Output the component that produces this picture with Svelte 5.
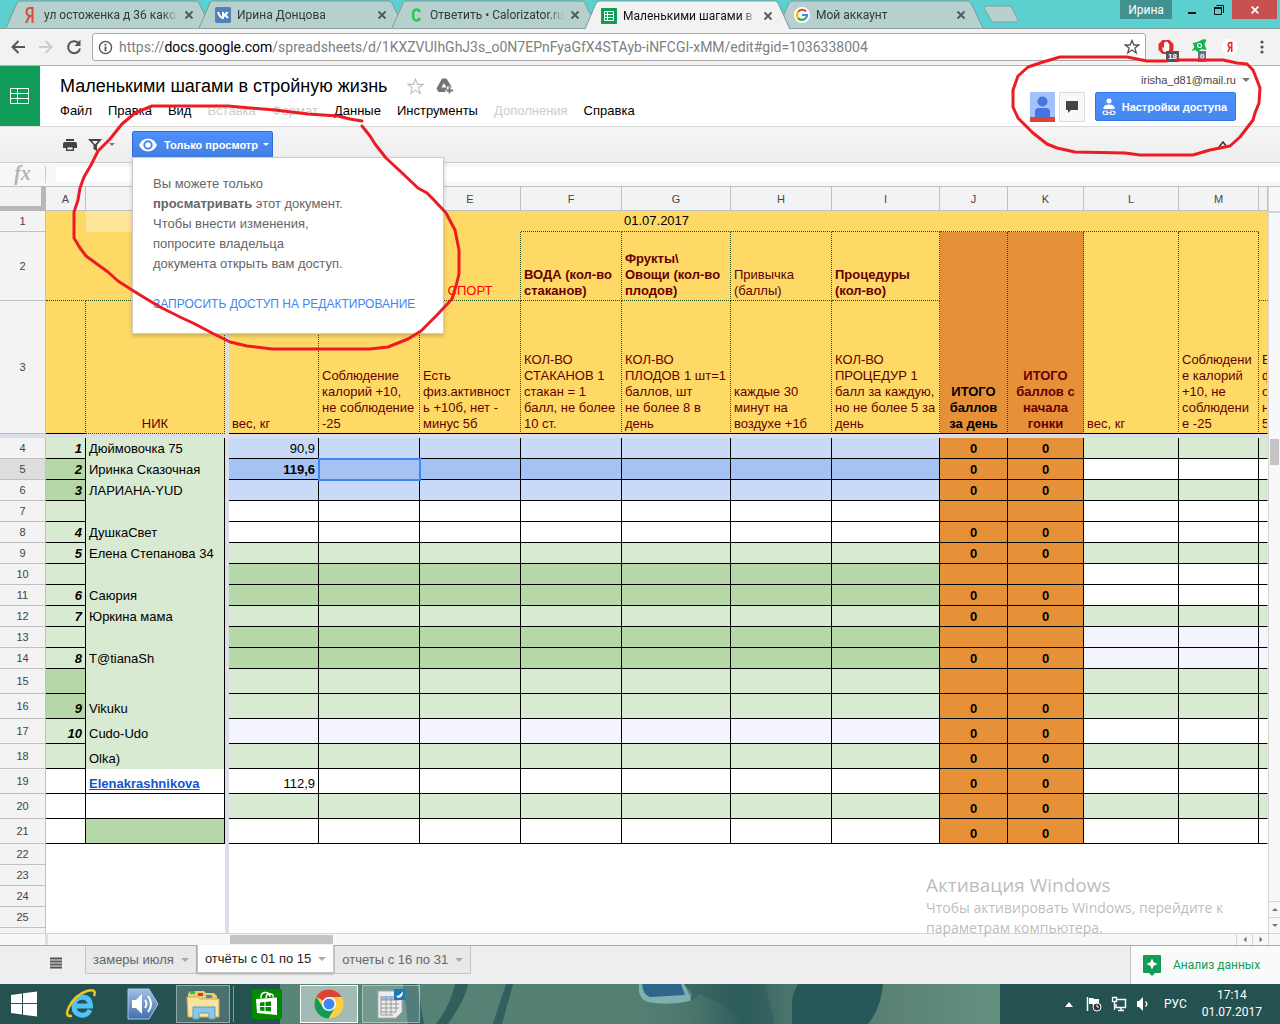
<script>
  const tabs = [
    { icon: 'ya', title: 'ул остоженка д 36 какое' },
    { icon: 'vk', title: 'Ирина Донцова' },
    { icon: 'cal', title: 'Ответить • Calorizator.ru' },
    { icon: 'sheet', title: 'Маленькими шагами в стройную', active: true },
    { icon: 'g', title: 'Мой аккаунт' }
  ];

  const menus = [
    ['Файл'], ['Правка'], ['Вид'], ['Вставка', true], ['Формат', true],
    ['Данные'], ['Инструменты'], ['Дополнения', true], ['Справка']
  ];

  const columns = ['A', 'B', '', 'C', 'D', 'E', 'F', 'G', 'H', 'I', 'J', 'K', 'L', 'M', ''];
  const cols = ['a', 'b', 'fr', 'c', 'd', 'd', 'd', 'g', 'd', 'i', 'j', 'k', 'l', 'm', 'n'];

  const tasks = [
    'КОЛ-ВО\nСТАКАНОВ 1\nстакан = 1\nбалл, не более\n10 ст.',
    'КОЛ-ВО\nПЛОДОВ 1 шт=1\nбаллов, шт\nне более 8 в\nдень',
    'каждые 30\nминут на\nвоздухе +1б',
    'КОЛ-ВО\nПРОЦЕДУР 1\nбалл за каждую,\nно не более 5 за\nдень'
  ];

  // n: row number, a/b/c: cell values, ac/bc/mc/lc: fills of column A, B, C–I and L–N
  const rows = [
    { n: 4, a: '1', b: 'Дюймовочка 75', c: '90,9', ac: 'lg', bc: 'lg', mc: 'lb', lc: 'lg', z: 1 },
    { n: 5, a: '2', b: 'Иринка Сказочная', c: '119,6', ac: 'dg', bc: 'lg', mc: 'db', lc: 'wh', z: 1 },
    { n: 6, a: '3', b: 'ЛАРИАНА-YUD', ac: 'dg', bc: 'lg', mc: 'lb', lc: 'lg', z: 1 },
    { n: 7, ac: 'lg', bc: 'lg', mc: 'wh', lc: 'wh' },
    { n: 8, a: '4', b: 'ДушкаСвет', ac: 'lg', bc: 'lg', mc: 'wh', lc: 'wh', z: 1 },
    { n: 9, a: '5', b: 'Елена Степанова 34', ac: 'lg', bc: 'lg', mc: 'lg', lc: 'lg', z: 1 },
    { n: 10, ac: 'lg', bc: 'lg', mc: 'dg', lc: 'wh' },
    { n: 11, a: '6', b: 'Саюрия', ac: 'lg', bc: 'lg', mc: 'dg', lc: 'wh', z: 1 },
    { n: 12, a: '7', b: 'Юркина мама', ac: 'lg', bc: 'lg', mc: 'lg', lc: 'lg', z: 1 },
    { n: 13, ac: 'lg', bc: 'lg', mc: 'dg', lc: 'lav' },
    { n: 14, a: '8', b: 'T@tianaSh', ac: 'lg', bc: 'lg', mc: 'dg', lc: 'lav', z: 1 },
    { n: 15, ac: 'dg', bc: 'lg', mc: 'lg', lc: 'lg', tall: 1 },
    { n: 16, a: '9', b: 'Vikuku', ac: 'dg', bc: 'lg', mc: 'lg', lc: 'lg', z: 1, tall: 1 },
    { n: 17, a: '10', b: 'Cudo-Udo', ac: 'lg', bc: 'lg', mc: 'lav', lc: 'wh', z: 1, tall: 1 },
    { n: 18, b: 'Olka)', ac: 'lg', bc: 'lg', mc: 'lg', lc: 'lg', z: 1, tall: 1 },
    { n: 19, b: 'Elenakrashnikova', c: '112,9', ac: 'wh', bc: 'wh', mc: 'wh', lc: 'wh', z: 1, tall: 1 },
    { n: 20, ac: 'wh', bc: 'wh', mc: 'lg', lc: 'lg', z: 1, tall: 1 },
    { n: 21, ac: 'wh', bc: 'dg', mc: 'wh', lc: 'wh', z: 1, tall: 1 }
  ];
  const emptyRows = [22, 23, 24, 25, ''];
  const mid = [0, 1, 2, 3, 4, 5];
</script>

<div class="page">
  <div class="strip">
    <div class="tabs">
      {#each tabs as t}
        <div class="tab" class:active={t.active}>
          <svg class="shape" viewBox="0 0 206 28" preserveAspectRatio="none" aria-hidden="true">
            <path d="M0 28L11 3Q12 1 14 1H190Q192 1 193 3L205 28" />
          </svg>
          <span class="fav">
            <svg viewBox="0 0 16 16" width="16" height="16" aria-hidden="true">
              {#if t.icon === 'ya'}
                <path d="M10.5 16V1H8Q4.500 1 4.500 5Q4.500 8 7.500 9L4 16M10.500 9H7.500" fill="none" stroke="#dd4b39" stroke-width="2" />
              {:else if t.icon === 'vk'}
                <rect width="16" height="16" rx="2" fill="#5181b8" />
                <path d="M3 5Q5 11 8 11V5M8 8Q11 8 12.500 5M8 8Q11 8 13 11" fill="none" stroke="#fff" stroke-width="2" />
              {:else if t.icon === 'cal'}
                <path d="M12 5Q11 2.500 8.500 2.500Q5 2.500 5 8T8.500 13.500Q11 13.500 12 11" fill="none" stroke="#1fd04a" stroke-width="2.500" />
              {:else if t.icon === 'sheet'}
                <rect width="16" height="16" rx="1" fill="#0f9d58" />
                <path d="M3.500 3.500H12.500V12.500H3.500ZM3.500 6.500H12.500M3.500 9.500H12.500M6.500 3.500V12.500" fill="none" stroke="#fff" />
              {:else}
                <circle cx="8" cy="8" r="8" fill="#fff" />
                <g fill="none" stroke-width="2.200">
                  <path d="M12 4.500A5 5 0 0 0 4 5" stroke="#ea4335" />
                  <path d="M4 5A5 5 0 0 0 4 11" stroke="#fbbc05" />
                  <path d="M4 11A5 5 0 0 0 11.500 11.500" stroke="#34a853" />
                  <path d="M11.500 11.500Q13 10 13 8H8" stroke="#4285f4" />
                </g>
              {/if}
            </svg>
          </span>
          <span class="tab-title">{t.title}</span>
          <button class="tab-x" aria-label="Закрыть вкладку">
            <svg viewBox="0 0 10 10" width="10" height="10"><path d="M1.500 1.500L8.500 8.500M8.500 1.500L1.500 8.500" stroke="#4c5a5a" stroke-width="1.800" /></svg>
          </button>
        </div>
      {/each}
      <button class="newtab" aria-label="Новая вкладка">
        <svg viewBox="0 0 36 18" width="36" height="18"><path d="M3 1H26Q28 1 29 3L35 15Q35 17 33 17H11Q9 17 8 15L1 3Q1 1 3 1Z" fill="#b7cfcd" stroke="#7aa5a3" /></svg>
      </button>
    </div>
    <div class="winbtns">
      <button class="user">Ирина</button>
      <button class="wb" aria-label="Свернуть"><svg viewBox="0 0 12 12" width="12" height="12"><path d="M2 9H10" stroke="#111" stroke-width="2" /></svg></button>
      <button class="wb" aria-label="Восстановить"><svg viewBox="0 0 12 12" width="12" height="12"><path d="M1.500 4V10.500H8.500V3.500H1.500M3.500 1.500H10.500V9" fill="none" stroke="#111" /><path d="M1 4H9" stroke="#111" stroke-width="2" /></svg></button>
      <button class="wb close" aria-label="Закрыть"><svg viewBox="0 0 12 12" width="10" height="10"><path d="M2 2L10 10M10 2L2 10" stroke="#fff" stroke-width="2" /></svg></button>
    </div>
  </div>

  <div class="nav">
    <button aria-label="Назад"><svg viewBox="0 0 16 16" width="16" height="16"><path d="M15 8H3M8.500 2L2.500 8L8.500 14" fill="none" stroke="#555" stroke-width="2" /></svg></button>
    <button aria-label="Вперёд"><svg viewBox="0 0 16 16" width="16" height="16"><path d="M1 8H13M7.500 2L13.500 8L7.500 14" fill="none" stroke="#ccc" stroke-width="2" /></svg></button>
    <button aria-label="Обновить"><svg viewBox="0 0 16 16" width="16" height="16"><path d="M12.500 4A6 6 0 1 0 14 9.500" fill="none" stroke="#555" stroke-width="2" /><path d="M14.500 0.500V7H8.500Z" fill="#555" /></svg></button>
    <div class="omni">
      <svg viewBox="0 0 16 16" width="15" height="15" aria-hidden="true"><circle cx="8" cy="8" r="6.500" fill="none" stroke="#555" stroke-width="1.500" /><path d="M8 7V12M8 4V5.800" stroke="#555" stroke-width="2" /></svg>
      <a class="url" href="#gid">https://<b>docs.google.com</b>/spreadsheets/d/1KXZVUIhGhJ3s_o0N7EPnFyaGfX4STAyb-iNFCGI-xMM/edit#gid=1036338004</a>
      <svg viewBox="0 0 16 16" width="16" height="16" aria-hidden="true"><path d="M8 1.500L9.900 6H14.800L10.900 9L12.300 14L8 11L3.700 14L5.100 9L1.200 6H6.100Z" fill="none" stroke="#555" stroke-width="1.300" /></svg>
    </div>
    <button class="ext" aria-label="Блокировщик: 18"><svg viewBox="0 0 16 16" width="16" height="16"><path d="M4.500 1H11.500L15.500 5V11L11.500 15H4.500L0.500 11V5Z" fill="#e22b2b" /><path d="M6 13Q3.500 10 4.500 8L6 9V3.500H7.200V2.500H8.500V3H10V4.500H11.200V11L9.500 13Z" fill="#fff" /></svg><span class="bdg">18</span></button>
    <button class="ext" aria-label="Защита: 0"><svg viewBox="0 0 16 16" width="17" height="16"><path d="M2 4L7 3L13 0L16 1L14 5L16 11L11 10L7 13L5 11L1 12L4 8Z" fill="#16b14b" /><circle cx="9" cy="6.500" r="2" fill="none" stroke="#fff" stroke-width="1.200" /></svg><span class="bdg g">0</span></button>
    <button class="ext" aria-label="Яндекс"><svg viewBox="0 0 16 16" width="16" height="16"><circle cx="8" cy="8" r="8" fill="#fff" /><path d="M9.700 13V3.500H8.500Q6.300 3.500 6.300 6T8.500 8.500H9.700M8 8.500L5.800 13" fill="none" stroke="#e22" stroke-width="1.500" /></svg></button>
    <button class="dots" aria-label="Меню"><svg viewBox="0 0 4 16" width="4" height="16"><circle cx="2" cy="3" r="1.600" fill="#555" /><circle cx="2" cy="8" r="1.600" fill="#555" /><circle cx="2" cy="13" r="1.600" fill="#555" /></svg></button>
  </div>

  <header class="head">
    <a class="logo" href="#home" aria-label="Таблицы">
      <svg viewBox="0 0 20 18" width="20" height="18"><path d="M0.500 1.500H18.500V16.500H0.500ZM0.500 6.500H18.500M0.500 11.500H18.500M7.500 1.500V16.500" fill="none" stroke="#fff" stroke-width="1" /></svg>
    </a>
    <div class="doc">
      <div class="titleline">
        <h1>Маленькими шагами в стройную жизнь</h1>
        <svg viewBox="0 0 16 16" width="17" height="17" aria-hidden="true"><path d="M8 1L9.900 6H15L11 9.200L12.500 14.500L8 11.400L3.500 14.500L5 9.200L1 6H6.100Z" fill="none" stroke="#bbb" /></svg>
        <svg class="drive" viewBox="0 0 18 16" width="18" height="16" aria-hidden="true"><path d="M6 0.500H10.500L16 9.500L14.500 9V8.500H11V11.500H9.500V14H2.500L0.500 10.500Z" fill="#757575" /><path d="M8 5L5.500 9.500H10.500Z" fill="#fff" /><path d="M13.500 9V15.500M10.500 12.500H17" stroke="#757575" stroke-width="1.800" /></svg>
      </div>
      <nav class="menu">
        {#each menus as [name, off]}<button disabled={off}>{name}</button>{/each}
      </nav>
    </div>
    <div class="account">
      <button class="mail">irisha_d81@mail.ru<i class="tri"></i></button>
      <div class="acts">
        <svg viewBox="0 0 25 30" width="25" height="30" role="img" aria-label="Профиль"><rect width="25" height="30" fill="#a1c2fa" /><circle cx="12.500" cy="9.500" r="5" fill="#4374e0" /><path d="M5 25V20Q5 16 9 16H16Q20 16 20 20V25Z" fill="#4374e0" /><rect y="25" width="25" height="5" fill="#db4437" /></svg>
        <button class="cmt" aria-label="Комментарии"><svg viewBox="0 0 14 14" width="14" height="14"><path d="M1 1H13V10H6L3 13V10H1Z" fill="#444" /></svg></button>
        <button class="share"><svg viewBox="0 0 14 18" width="14" height="18" aria-hidden="true"><circle cx="7" cy="3" r="2.500" fill="#fff" /><path d="M1.500 11V9.500Q2 6.500 7 6.500T12.500 9.500V11Z" fill="#fff" /><path d="M6 13H3.500Q1 13 1 14.800T3.500 16.500H6M8 13H10.500Q13 13 13 14.800T10.500 16.500H8M4 14.800H10" fill="none" stroke="#fff" stroke-width="1.200" /></svg>Настройки доступа</button>
      </div>
    </div>
  </header>

  <div class="toolbar">
    <button aria-label="Печать"><svg viewBox="0 0 14 12" width="14" height="12"><path d="M3 0H11V2H3ZM0 5Q0 3 2 3H12Q14 3 14 5V9H11V7H3V9H0Z" fill="#444" /><path d="M3.700 7.700H10.300V11.300H3.700Z" fill="#fff" stroke="#444" stroke-width="1.400" /></svg></button>
    <button class="filter" aria-label="Фильтр"><svg viewBox="0 0 14 12" width="14" height="12"><path d="M0 0H14L9 6V12L5.500 10V6Z" fill="#444" /><path d="M4 2H10L7 5.500Z" fill="#eee" /></svg><i class="tri s"></i></button>
    <div class="viewonly">
      <button class="vo"><svg viewBox="0 0 18 14" width="18" height="14" aria-hidden="true"><path d="M0 7Q3 0.500 9 0.500T18 7Q15 13.500 9 13.500T0 7Z" fill="#fff" /><circle cx="9" cy="7" r="3.700" fill="#fff" stroke="#4787ed" stroke-width="2" /></svg>Только просмотр<i class="tri s light"></i></button>
      <div class="pop">
        <p>Вы можете только<br /><b>просматривать</b> этот документ.<br />Чтобы внести изменения,<br />попросите владельца<br />документа открыть вам доступ.</p>
        <a href="#request">ЗАПРОСИТЬ ДОСТУП НА РЕДАКТИРОВАНИЕ</a>
      </div>
    </div>
    <button class="collapse" aria-label="Свернуть меню"><svg viewBox="0 0 10 10" width="10" height="10"><path d="M1 7L5 2L9 7" fill="none" stroke="#333" stroke-width="1.500" /></svg></button>
  </div>

  <div class="fbar">
    <label for="fx">fx</label>
    <input id="fx" readonly />
  </div>

  <div class="gridwrap">
    <table>
      <colgroup><col class="rh" />{#each cols as c}<col class={c} />{/each}</colgroup>
      <thead>
        <tr class="ch">
          <td class="corner"></td>
          {#each columns as c, i}
            {#if i === 2}<td class="vf"></td>{:else}<th scope="col">{c}</th>{/if}
          {/each}
        </tr>
      </thead>
      <tbody>
        <tr class="r1">
          <th scope="row">1</th>
          <td class="y"></td><td class="ylight"></td><td class="vf"></td>
          <td class="y"></td><td class="y"></td><td class="y"></td>
          <td class="y db_"></td><td class="y db_ date">01.07.2017</td><td class="y db_"></td><td class="y db_"></td>
          <td class="y db_"></td><td class="y db_"></td><td class="y db_"></td><td class="y db_"></td><td class="y"></td>
        </tr>
        <tr class="r2">
          <th scope="row">2</th>
          <td class="y db_"></td><td class="y db_"></td><td class="vf"></td>
          <td class="y db_"></td><td class="y db_"></td>
          <td class="y db_ dr sport">СПОРТ</td>
          <td class="y db_ dr m bold">ВОДА (кол-во{'\n'}стаканов)</td>
          <td class="y db_ dr m bold">Фрукты\{'\n'}Овощи (кол-во{'\n'}плодов)</td>
          <td class="y db_ dr m">Привычка{'\n'}(баллы)</td>
          <td class="y db_ dr m bold">Процедуры{'\n'}(кол-во)</td>
          <td class="o dr sb ctr" rowspan="2">ИТОГО{'\n'}баллов{'\n'}за день</td>
          <td class="o dr sb ctr m" rowspan="2">ИТОГО{'\n'}баллов с{'\n'}начала{'\n'}гонки</td>
          <td class="y dr sb m" rowspan="2">вес, кг</td>
          <td class="y dr sb m" rowspan="2">Соблюдени{'\n'}е калорий{'\n'}+10, не{'\n'}соблюдени{'\n'}е -25</td>
          <td class="y db_"></td>
        </tr>
        <tr class="r3">
          <th scope="row">3</th>
          <td class="y dr sb"></td><td class="y dr db_ m nik">НИК</td><td class="vf"></td>
          <td class="y dr sb m">вес, кг</td>
          <td class="y dr sb m">Соблюдение{'\n'}калорий +10,{'\n'}не соблюдение{'\n'}-25</td>
          <td class="y dr sb m">Есть{'\n'}физ.активност{'\n'}ь +10б, нет -{'\n'}минус 5б</td>
          {#each tasks as t}<td class="y dr sb m">{t}</td>{/each}
          <td class="y sb m">Е{'\n'}ф{'\n'}о{'\n'}н{'\n'}5</td>
        </tr>
        <tr class="hf"><td colspan="16"></td></tr>
        {#each rows as r}
          <tr class:tall={r.tall}>
            <th scope="row" class:cur={r.n === 5}>{r.n}</th>
            <td class="sr sb num {r.ac}">{r.a ?? ''}</td>
            <td class="sr name {r.bc}" class:sb={r.n > 18} class:open-b={r.n < 19}>{#if r.n === 19}<a href="#user">{r.b}</a>{:else}{r.b ?? ''}{/if}</td>
            <td class="vf"></td>
            <td class="sr sb right {r.mc}" class:bold={r.n === 5}>{r.c ?? ''}</td>
            {#each mid as i}<td class="sr sb {r.mc}" class:sel={r.n === 5 && i === 0}></td>{/each}
            <td class="sr sb o ctr">{r.z ? 0 : ''}</td>
            <td class="sr sb o ctr">{r.z ? 0 : ''}</td>
            <td class="sr sb {r.lc}"></td><td class="sr sb {r.lc}"></td><td class="sb {r.lc}"></td>
          </tr>
        {/each}
        {#each emptyRows as n}
          <tr class:cut={n === ''}><th scope="row">{n}</th><td colspan="2"></td><td class="vf"></td><td colspan="12"></td></tr>
        {/each}
      </tbody>
    </table>
    <div class="vscroll">
      <div class="vtop"></div>
      <div class="vtrack"><div class="vthumb"></div></div>
      <button aria-label="Вверх"><i class="tri s up"></i></button>
      <button aria-label="Вниз"><i class="tri s"></i></button>
    </div>
  </div>
  <div class="hscroll">
    <div class="hpad"></div>
    <div class="htrack"><div class="hthumb"></div></div>
    <button aria-label="Влево"><i class="tri s lf"></i></button>
    <button aria-label="Вправо"><i class="tri s rt"></i></button>
    <div class="hend"></div>
  </div>

  <div class="sheets">
    <button class="all" aria-label="Все листы"><svg viewBox="0 0 12 12" width="12" height="12"><path d="M0 1.500H12M0 4.500H12M0 7.500H12M0 10.500H12" stroke="#555" stroke-width="2" /></svg></button>
    <button class="st">замеры июля<i class="tri"></i></button>
    <button class="st on">отчёты с 01 по 15<i class="tri"></i></button>
    <button class="st">отчеты с 16 по 31<i class="tri"></i></button>
    <button class="explore"><svg viewBox="0 0 18 21" width="18" height="21" aria-hidden="true"><path d="M1 0H17Q18 0 18 1V17Q18 18 17 18H12L9 21L6 18H1Q0 18 0 17V1Q0 0 1 0Z" fill="#0f9d58" /><path d="M9 3.500L10.700 7.300L14.500 9L10.700 10.700L9 14.500L7.300 10.700L3.500 9L7.300 7.300Z" fill="#fff" /></svg>Анализ данных</button>
  </div>

  <footer class="task">
    <svg class="wall" viewBox="0 0 1280 40" preserveAspectRatio="none" aria-hidden="true">
      <defs>
        <linearGradient id="wg"><stop offset="0" stop-color="#578578" /><stop offset=".5" stop-color="#547f73" /><stop offset=".57" stop-color="#4c766d" /><stop offset=".64" stop-color="#2f5f5d" /><stop offset=".7" stop-color="#48736a" /><stop offset=".82" stop-color="#587f73" /><stop offset="1" stop-color="#64917f" /></linearGradient>
      </defs>
      <rect width="1280" height="40" fill="#245250" />
      <rect x="280" width="720" height="40" fill="url(#wg)" />
      <path d="M403 0H417L424 40H408ZM455 0H468Q466 14 448 40H436Q450 22 455 0ZM506 0H513L502 40H493Z" fill="#2f605e" />
      <path d="M639 0Q637 14 648 18Q668 22 690 17L692 10L684 0Z" fill="#7fb0b0" />
      <path d="M642 0Q643 11 650 13L685 11L681 0Z" fill="#2d6688" />
      <path d="M684 0L692 16L700 10L724 22L745 40H775L765 0Z" fill="#2a5a5a" opacity=".5" />
      <path d="M798 0H883Q881 24 868 40H792V20Q792 10 798 0Z" fill="#275758" />
    </svg>
    <button class="ti start" aria-label="Пуск"><svg viewBox="0 0 26 26" width="26" height="26"><path d="M0 4L11 2.500V12H0ZM12 2.300L26 0.500V12H12ZM0 13H11V23.500L0 22ZM12 13H26V25.500L12 23.700Z" fill="#fff" /></svg></button>
    <button class="ti" aria-label="Internet Explorer"><svg viewBox="0 0 32 32" width="32" height="32"><path d="M25 22Q22 28 16 27Q9 26 9 18T17 9Q25 9 25.500 18H11" fill="none" stroke="#4fc3f5" stroke-width="5" /><path d="M7 28Q-1 29 4 19Q10 7 22 3Q32 0 29 8" fill="none" stroke="#f5c518" stroke-width="2.500" /></svg></button>
    <button class="ti" aria-label="Звук"><svg viewBox="0 0 32 32" width="32" height="32"><defs><linearGradient id="sg" x2="0" y2="1"><stop offset="0" stop-color="#9fc0e4" /><stop offset="1" stop-color="#4370ad" /></linearGradient></defs><path d="M1 1H22L31 16L22 31H1Z" fill="url(#sg)" stroke="#aac7e6" /><path d="M5 12H9L15 6V26L9 20H5Z" fill="#fff" /><path d="M18 12Q21 16 18 20M21 8Q27 16 21 24" fill="none" stroke="#fff" stroke-width="2" /></svg></button>
    <button class="ti open multi" aria-label="Проводник"><svg viewBox="0 0 34 32" width="34" height="32"><path d="M2 6V28H31V8L28 5H20L18 3H4Z" fill="#e8cc74" /><path d="M4 3H9V6H4Z" fill="#2cb84a" /><path d="M12 5H17V8H12Z" fill="#d43c2c" /><path d="M20 7H26V10H20Z" fill="#2e8fd8" /><path d="M1 9H12L14 11H33V29H2Z" fill="#f7e4a0" stroke="#cfae50" /><path d="M7 31V19H29V31H23V25H13V31Z" fill="#8cc8e6" stroke="#5c9fc4" /></svg></button>
    <button class="ti" aria-label="Магазин"><svg viewBox="0 0 30 30" width="30" height="30"><rect width="30" height="30" fill="#008a00" /><path d="M4 10L25 8.500V26L5 24Z" fill="#fff" /><path d="M9 9V7Q10 3 14 3.500T18 8M14 9Q14 5 18 5T21 8.500" fill="none" stroke="#fff" stroke-width="1.500" /><path d="M8 13.500L12.500 13V17H8ZM13.500 13L19 12.500V17H13.500ZM8 18H12.500V22L8 21.500ZM13.500 18H19V22.500L13.500 22Z" fill="#008a00" /></svg></button>
    <button class="ti open front" aria-label="Chrome"><svg viewBox="0 0 30 30" width="30" height="30"><circle cx="15" cy="15" r="14.500" fill="#ffcd40" /><path d="M15 15L2.400 7.700A14.500 14.500 0 0 1 27.600 8H15Z" fill="#db4437" /><path d="M15 15L21 18.500L14.500 29.500A14.500 14.500 0 0 1 2.400 7.700L9 18.500Z" fill="#0f9d58" /><circle cx="15" cy="15" r="7" fill="#fff" /><circle cx="15" cy="15" r="5.500" fill="#4285f4" /></svg></button>
    <button class="ti open" aria-label="Редактор"><svg viewBox="0 0 30 32" width="30" height="32"><path d="M2 3H26V24L20 30H2Z" fill="#ececec" stroke="#aaa" /><path d="M5 8H20V12H5Z" fill="#9db8ec" /><path d="M5 8V27M10 8V27M15 8V27M20 8V24M5 12H23M5 16H23M5 20H23M5 24H20M5 27H17" stroke="#999" /><rect x="18" y="1" width="11" height="11" fill="#1979be" /><path d="M20 8Q24 8 27 3Q27 10 22 10Z" fill="#fff" /></svg></button>
    <div class="tray">
      <svg viewBox="0 0 8 5" width="8" height="5" aria-hidden="true"><path d="M0 5L4 0L8 5Z" fill="#fff" /></svg>
      <svg viewBox="0 0 16 16" width="16" height="16" aria-hidden="true"><path d="M1.500 1V15" stroke="#fff" stroke-width="1.500" /><path d="M3 2H7L8 3H13V9H7L6 8H3Z" fill="#fff" /><circle cx="11" cy="11" r="4" fill="#333" stroke="#fff" /><path d="M11 8.500V11H13" fill="none" stroke="#fff" /></svg>
      <svg viewBox="0 0 16 16" width="16" height="16" aria-hidden="true"><path d="M6 3.500H14.500V11.500H5V8M7 14.500H13M10 12V14" fill="none" stroke="#fff" stroke-width="1.500" /><path d="M1.500 1.500H5.500V5.500H1.500ZM3.500 5.500V14" fill="none" stroke="#fff" stroke-width="1.300" /></svg>
      <svg viewBox="0 0 14 16" width="14" height="16" aria-hidden="true"><path d="M1 5H3L7 1V15L3 11H1Z" fill="#fff" /><path d="M9.500 5.500Q12 8 9.500 10.500" fill="none" stroke="#fff" stroke-width="1.300" /></svg>
      <span class="lang">РУС</span>
      <div class="clock"><span>17:14</span><span>01.07.2017</span></div>
    </div>
  </footer>

  <div class="activate"><strong>Активация Windows</strong><span>Чтобы активировать Windows, перейдите к<br />параметрам компьютера.</span></div>

  <svg class="mark left" viewBox="60 90 410 270" width="410" height="270" aria-hidden="true">
    <polyline points="362,121 350,119 338,116 308,114 275,110 228,106 152,106 135,113 122,124 110,139 98,151 91,165 84,177 80,188 78,200 74,212 74,238 80,248 86,256 97,264 108,272 118,281 132,290 145,298 160,307 180,317 195,324 212,333 230,342 247,346 272,349 370,349 388,347 408,339 421,331 437,315 452,299 456,286 459,274 459,250 455,230 446,213 434,200 427,193 418,188 400,171 386,158 375,144 370,136 362,126" />
  </svg>
  <svg class="mark rightm" viewBox="1000 50 280 120" width="280" height="120" aria-hidden="true">
    <polyline points="1167,61 1147,61 1137,59 1127,57 1107,57 1060,57 1043,62 1028,67 1018,76 1013,90 1013,107 1018,118 1033,133 1047,144 1057,148 1075,152 1125,153 1140,155 1193,155 1210,150 1230,146 1240,137 1253,120 1255,113 1259,103 1260,88 1257,80 1253,70 1247,64 1237,63 1223,60 1177,60" />
  </svg>
</div>

<style>
  :global(body) { background: #fff; }
  .page { position: relative; min-height: 100vh; overflow: hidden; display: flex; flex-direction: column; font-family: "Liberation Sans", Arial, sans-serif; font-size: 13px; color: #000; }
  .page * { box-sizing: border-box; }
  button { font: inherit; color: inherit; background: none; border: 0; padding: 0; margin: 0; display: flex; align-items: center; }
  svg { flex: none; display: block; }

  .strip { height: 29px; background: #5ccfcf; border-bottom: 1px solid #8aa3a2; display: flex; justify-content: space-between; font-family: Roboto, sans-serif; font-size: 12px; }
  .tabs { display: flex; padding-left: 6px; }
  .tab { position: relative; width: 206px; height: 28px; margin-right: -13px; display: flex; align-items: center; padding: 2px 18px 0 16px; color: #2c3c3c; }
  .shape { position: absolute; inset: 0; width: 100%; height: 28px; fill: #b7cfcd; stroke: #7b9c9b; }
  .tab.active { z-index: 2; height: 29px; color: #111; }
  .active .shape { fill: #f2f2f2; height: 29px; }
  .fav, .tab-title, .tab-x { position: relative; }
  .tab-title { flex: 1; margin-left: 6px; white-space: nowrap; overflow: hidden; mask-image: linear-gradient(to right, #000 88%, transparent); }
  .tab-x { margin-left: 6px; }
  .newtab { margin-left: 12px; align-self: center; }
  .winbtns { display: flex; align-items: flex-start; padding-right: 3px; }
  .winbtns button { height: 19px; justify-content: center; }
  .user { width: 52px; margin-right: 6px; background: #42908f; color: #fff; }
  .winbtns .wb { width: 27px; }
  .winbtns .close { width: 45px; background: #c75050; }

  .nav { height: 37px; background: #f2f2f2; border-bottom: 1px solid #b6b4b6; display: flex; align-items: center; padding: 0 16px 0 10px; gap: 12px; }
  .omni { flex: 1; min-width: 0; height: 28px; margin: 0 -2px 0 -2px; background: #fff; border: 1px solid #a8a8a8; border-radius: 3px; display: flex; align-items: center; padding: 0 5px; gap: 6px; }
  .url { flex: 1; min-width: 0; overflow: hidden; white-space: nowrap; color: #808080; text-decoration: none; font-family: Roboto, sans-serif; font-size: 14px; }
  .url b { font-weight: 400; color: #000; }
  .ext { position: relative; width: 20px; justify-content: center; }
  .bdg { position: absolute; left: 10px; top: 12px; padding: 0 2px; font-size: 8px; line-height: 11px; font-weight: 700; color: #fff; background: #555; }
  .bdg.g { background: #6d7480; }
  .dots { margin-left: 8px; }

  .head { height: 61px; display: flex; border-bottom: 1px solid #d9d9d9; background: #fff; }
  .logo { width: 40px; height: 60px; background: #0f9d58; display: flex; align-items: center; justify-content: center; }
  .doc { flex: 1; padding: 8px 0 0 20px; }
  .titleline { display: flex; align-items: center; height: 24px; }
  h1 { margin: 0 20px 0 0; font-size: 18px; font-weight: 400; white-space: nowrap; }
  .drive { margin-left: 12px; }
  .menu { display: flex; gap: 16px; height: 25px; align-items: center; white-space: nowrap; }
  .menu button:disabled { color: #ccc; }
  .account { padding: 6px 30px 0 0; display: flex; flex-direction: column; align-items: flex-end; }
  .mail { font-size: 11px; height: 16px; color: #444; gap: 6px; margin-bottom: 4px; }
  .acts { display: flex; margin-right: 14px; }
  .cmt { width: 26px; height: 30px; margin: 0 10px 0 4px; border: 1px solid #dcdcdc; background: #f8f8f8; justify-content: center; }
  .share { height: 29px; padding: 0 8px 0 6px; gap: 6px; background: linear-gradient(#4d90fe, #4787ed); border: 1px solid #3079ed; border-radius: 2px; color: #fff; font-size: 11px; font-weight: 700; white-space: nowrap; }
  .tri { display: block; border: 4px solid transparent; border-top-color: #777; border-bottom: 0; }
  .tri.s { border-width: 3px; border-bottom: 0; }
  .tri.light { border-top-color: #fff; }
  .tri.up { transform: rotate(180deg); }
  .tri.lf { transform: rotate(90deg); }
  .tri.rt { transform: rotate(-90deg); }

  .toolbar { height: 36px; display: flex; align-items: center; padding: 0 52px 0 63px; background: linear-gradient(#f5f5f5, #ededed); border-bottom: 1px solid #cfcfcf; }
  .filter { margin-left: 11px; gap: 7px; }
  .viewonly { position: relative; margin-left: 17px; }
  .vo { height: 27px; padding: 0 3px 0 6px; gap: 7px; background: linear-gradient(#4d90fe, #427fe0); border: 1px solid #2f6bd8; border-radius: 2px; color: #fff; font-size: 11px; font-weight: 700; white-space: nowrap; }
  .vo .tri { margin-left: -2px; }
  .pop { position: absolute; z-index: 5; left: 0; top: 26px; width: 312px; height: 177px; background: #fff; border: 1px solid #ccc; box-shadow: 0 2px 4px rgba(0, 0, 0, .2); padding: 16px 20px; line-height: 20px; color: #666; white-space: nowrap; }
  .pop p { margin: 0 0 20px; }
  .pop a { color: #4285f4; text-decoration: none; font-size: 12px; }
  .collapse { margin-left: auto; }

  .fbar { height: 23px; display: flex; align-items: center; background: #f7f7f7; }
  .fbar label { width: 46px; height: 17px; text-align: center; border-right: 1px solid #ccc; font: italic 700 20px/15px "Liberation Serif", serif; color: #b4b4b4; }
  .fbar input { flex: 1; height: 15px; margin-left: 10px; border: 0; background: #fff; padding: 0; }

  .gridwrap { display: flex; border-top: 1px solid #c0c0c0; border-bottom: 1px solid #d4d4d4; }
  table { flex: 1; min-width: 0; width: 100%; table-layout: fixed; border-collapse: separate; border-spacing: 0; }
  col.rh { width: 46px; } col.a { width: 40px; } col.b { width: 139px; } col.fr { width: 4px; } col.c { width: 90px; }
  col.d { width: 101px; } col.g { width: 109px; } col.i { width: 108px; } col.j { width: 68px; } col.k { width: 76px; }
  col.l { width: 95px; } col.m { width: 80px; }
  td, th { height: 21px; padding: 0 3px 1px; border: 0 solid transparent; border-width: 0 1px 1px 0; line-height: 16px; vertical-align: bottom; text-align: left; white-space: pre; overflow: hidden; }
  th { padding: 0; background: #f3f3f3; border-color: #c0c0c0; font-size: 11px; font-weight: 400; color: #444; text-align: center; vertical-align: middle; }
  th.cur { background: #ddd; }
  .ch td, .ch th { height: 24px; }
  .corner { background: #f3f3f3; border: 0 solid #b7b7b7; border-width: 0 5px 5px 0; }
  .r2 > * { height: 69px; }
  .r3 > * { height: 133px; }
  tr .vf { padding: 0; border: 0; background: #dadfe8; }
  .hf td { height: 4px; padding: 0; border: 0; background: #dcdfe8; line-height: 0; }
  .tall > * { height: 25px; }
  tr.cut > * { height: 5px; padding: 0; border-bottom: 0; line-height: 0; }
  .y { background: #ffd966; }
  .ylight { background: #ffe599; }
  td.db_ { border-bottom: 1px dotted #274e13; }
  td.dr { border-right: 1px dotted #274e13; }
  td.sb { border-bottom: 1px solid #000; }
  td.sr { border-right: 1px solid #000; }
  td.open-b { border-bottom: 0; padding-bottom: 2px; }
  .m { color: #660000; }
  .bold { font-weight: 700; }
  td.date { padding-left: 2px; vertical-align: middle; }
  .sport { color: #f00; text-align: center; }
  .nik { text-align: center; }
  .o { background: #e69138; }
  .ctr { text-align: center; font-weight: 700; }
  .num { text-align: right; font-weight: 700; font-style: italic; }
  .right { text-align: right; }
  .lg { background: #d9ead3; } .dg { background: #b6d7a8; } .lb { background: #c9daf8; } .db { background: #a4c2f4; }
  .wh { background: #fff; } .lav { background: #f4f4ff; }
  .sel { outline: 2px solid #4285f4; outline-offset: -1px; }
  td a { color: #1155cc; font-weight: 700; }

  .vscroll { width: 12px; display: flex; flex-direction: column; background: #f8f8f8; border-left: 1px solid #d4d4d4; }
  .vtop { height: 26px; border-bottom: 2px solid #d4d4dc; }
  .vtrack { flex: 1; padding: 226px 1px 0; }
  .vthumb { height: 26px; background: #c4c4c4; }
  .vscroll button { height: 16px; border-top: 1px solid #d4d4d4; justify-content: center; }
  .hscroll { height: 11px; display: flex; background: #f8f8f8; }
  .hpad { width: 48px; border-right: 3px solid #dadfe8; }
  .htrack { flex: 1; padding: 1px 0 0 182px; }
  .hthumb { width: 103px; height: 9px; background: #c4c4c4; }
  .hscroll button { width: 16px; border-left: 1px solid #d4d4d4; justify-content: center; }
  .hend { width: 12px; border-left: 1px solid #d4d4d4; }

  .sheets { height: 39px; display: flex; align-items: flex-start; background: #eee; border-top: 1px solid #a9a9a9; padding-left: 50px; }
  .all { height: 34px; margin-right: 23px; }
  .st { height: 28px; padding: 0 7px; gap: 7px; color: #666; background: #e8e8e8; border: 1px solid #c4c4c4; border-top: 0; white-space: nowrap; }
  .st.on { background: #fff; color: #222; margin-top: -1px; box-shadow: 0 1px 2px rgba(0, 0, 0, .35); }
  .st .tri { border-top-color: #aaa; }
  .explore { margin-left: auto; height: 38px; width: 150px; padding-left: 12px; gap: 12px; background: #fafafa; border-left: 1px solid #c0c0c0; color: #0f9d58; font-family: Roboto, sans-serif; font-size: 12px; white-space: nowrap; }

  .task { position: relative; height: 40px; display: flex; align-items: center; color: #fff; font-family: Roboto, sans-serif; font-size: 12px; }
  .wall { position: absolute; inset: 0; width: 100%; height: 40px; }
  .ti { position: relative; width: 58px; height: 38px; margin-right: 4px; justify-content: center; border: 1px solid transparent; }
  .start { width: 48px; }
  .open { background: rgba(255, 255, 255, .18); border-color: rgba(255, 255, 255, .4); }
  .multi { width: 54px; box-shadow: 4px 0 0 -1px #245250, 5px 0 0 -1px #7f9c9a; margin-right: 8px; }
  .front { background: rgba(255, 255, 255, .45); border-color: #fff; }
  .tray { position: relative; margin-left: auto; display: flex; align-items: center; gap: 9px; padding-right: 18px; }
  .tray > :first-child { margin-right: 4px; }
  .lang { margin: 0 6px 0 5px; }
  .clock { display: flex; flex-direction: column; align-items: center; line-height: 17px; }

  .activate { position: absolute; z-index: 4; right: 52px; bottom: 86px; width: 302px; display: flex; flex-direction: column; color: rgba(120, 120, 120, .5); font-family: "Open Sans", sans-serif; font-size: 14px; line-height: 20px; white-space: nowrap; }
  .activate strong { font-size: 19px; font-weight: 400; line-height: 26px; }
  .mark { position: absolute; z-index: 6; pointer-events: none; fill: none; stroke: #ed1c24; stroke-width: 3; stroke-linejoin: round; stroke-linecap: round; }
  .mark.left { left: 60px; top: 90px; }
  .mark.rightm { right: 0; top: 50px; }
</style>
